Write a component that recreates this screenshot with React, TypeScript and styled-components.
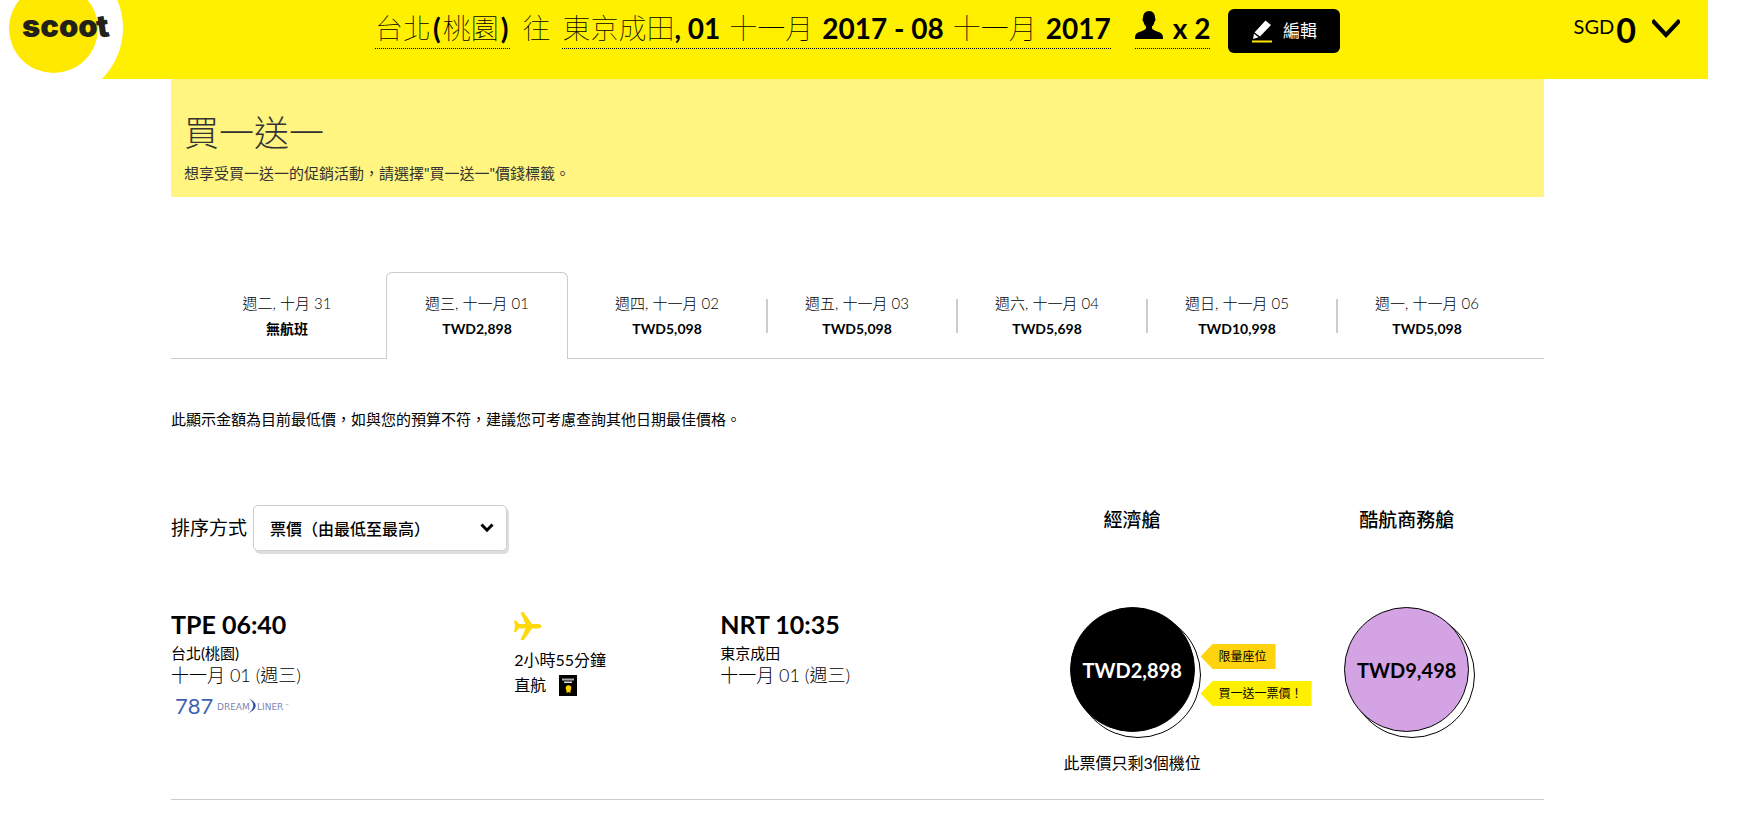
import React from "react";
import styled, { createGlobalStyle } from "styled-components";

const GlobalStyle = createGlobalStyle`
  *, *::before, *::after { box-sizing: border-box; }
  body {
    margin: 0;
    background: #fff;
    color: #000;
    font-family: Lato, "Noto Sans CJK TC", sans-serif;
    font-size: 15px;
    font-weight: 400;
  }
  button, select { font: inherit; color: inherit; }
  h1, h2, p { margin: 0; font-weight: inherit; }
`;

const Page = styled.div`
  margin-right: 55px;
`;

const TopBar = styled.header`
  display: flex;
  align-items: flex-start;
  min-height: 79px;
  padding-right: 28px;
  background: #fff000;
`;

const LogoLink = styled.a`
  display: block;
  flex: none;
  height: 79px;
`;

const Trip = styled.div`
  display: flex;
  align-items: flex-start;
  margin-left: 245px;
  padding-top: 8px;
  font-size: 28px;
  line-height: 40px;
  font-weight: 100;
  white-space: nowrap;

  b { font-weight: 700; }
`;

const TripPart = styled.a`
  border-bottom: 1px dotted #000;
  color: inherit;
  text-decoration: none;
`;

const Paren = styled.b`
  margin: 0 2px;
`;

const To = styled.span`
  margin: 0 12px;
`;

const Month = styled.span`
  margin: 0 1px;
`;

const Travellers = styled(TripPart)`
  display: flex;
  gap: 10px;
  margin-left: 24px;

  svg { margin-top: 3px; }
`;

const EditButton = styled.button`
  display: flex;
  align-items: center;
  justify-content: center;
  gap: 10px;
  width: 112px;
  height: 44px;
  margin: 1px 0 0 18px;
  padding: 0;
  border: 0;
  border-radius: 6px;
  background: #000;
  color: #fff;
  font-size: 17px;
  font-weight: 400;
  line-height: 24px;
`;

const Cart = styled.button`
  display: flex;
  align-items: flex-start;
  margin-left: auto;
  padding: 8px 0 0;
  border: 0;
  background: none;
  font-size: 20px;
  line-height: 36px;

  svg { margin: 11px 0 0 16px; }
`;

const CartTotal = styled.span`
  margin-left: 2px;
  font-size: 34px;
  font-weight: 700;
  line-height: 44px;
`;

const Content = styled.main`
  padding: 0 164px 0 171px;
`;

const Promo = styled.section`
  padding: 29px 13px 14px;
  background: #fff580;
  color: #333;
`;

const PromoTitle = styled.h1`
  font-size: 35px;
  font-weight: 200;
  line-height: 48px;
`;

const PromoText = styled.p`
  margin-top: 7px;
  line-height: 20px;
`;

const Tabs = styled.nav`
  display: flex;
  margin-top: 75px;
  padding: 0 18px 0 25px;
  border-bottom: 1px solid #ccc;
`;

const TabSlot = styled.div<{ $divided?: boolean }>`
  position: relative;
  flex: 1 1 0;
  padding-right: 8px;

  &::after {
    content: "";
    display: ${(p) => (p.$divided ? "block" : "none")};
    position: absolute;
    top: 27px;
    right: -2px;
    width: 2px;
    height: 34px;
    background: #ccc;
  }
`;

const Tab = styled.button<{ $active?: boolean }>`
  display: block;
  width: 100%;
  margin-bottom: -1px;
  padding: 18px 0;
  border: 1px solid ${(p) => (p.$active ? "#ccc" : "transparent")};
  border-bottom: 0;
  border-radius: 6px 6px 0 0;
  background: ${(p) => (p.$active ? "#fff" : "none")};
  text-align: center;
`;

const TabDate = styled.span`
  display: block;
  font-weight: 300;
  line-height: 24px;
`;

const TabPrice = styled.span`
  display: block;
  margin-top: 2px;
  font-size: 14px;
  font-weight: 700;
  line-height: 24px;
`;

const Notice = styled.p`
  margin-top: 50px;
  line-height: 20px;
`;

const Columns = styled.div`
  display: grid;
  grid-template-columns: 5fr 3fr 4fr 4fr 4fr;
`;

const ListHeader = styled(Columns)`
  margin-top: 76px;
`;

const Sort = styled.div`
  display: flex;
  align-items: center;
  grid-column: span 3;
  gap: 6px;
  font-size: 19px;

  label { line-height: 28px; }
`;

const SelectBox = styled.div`
  display: grid;
  grid-template-columns: 1fr 26px;
  align-items: center;
  width: 254px;
  height: 46px;
  border: 1px solid #ccc;
  border-radius: 5px;
  box-shadow: 2px 3px 0 #dedede;

  select {
    grid-area: 1 / 1 / 2 / 3;
    height: 44px;
    padding: 0 30px 0 16px;
    border: 0;
    background: none;
    appearance: none;
    font-size: 16px;
    font-weight: 500;
  }

  svg {
    grid-area: 1 / 2;
    pointer-events: none;
  }
`;

const CabinName = styled.h2`
  font-size: 19px;
  font-weight: 500;
  line-height: 30px;
  text-align: center;
`;

const Flight = styled(Columns)`
  margin-top: 56px;
  padding-bottom: 24px;
  border-bottom: 1px solid #ccc;
`;

const StopTime = styled.div`
  font-size: 25px;
  font-weight: 700;
  line-height: 34px;
`;

const City = styled.div`
  line-height: 24px;
`;

const StopDate = styled.div`
  font-size: 18px;
  font-weight: 300;
  line-height: 20px;
`;

const Aircraft = styled.svg`
  display: block;
  margin-top: 9px;
`;

const Leg = styled.div`
  padding-top: 5px;
  font-size: 16px;

  > svg { display: block; margin-bottom: 8px; }
`;

const LegTime = styled.div`
  line-height: 24px;
`;

const LegKind = styled.div`
  display: flex;
  align-items: center;
  gap: 13px;
  line-height: 26px;
`;

const Fare = styled.div`
  display: flex;
  flex-direction: column;
  align-items: center;
`;

const FareWrap = styled.div`
  position: relative;
  isolation: isolate;
`;

const FareButton = styled.button<{ $business?: boolean }>`
  display: block;
  width: 125px;
  height: 125px;
  padding: 0;
  border: 1px solid #000;
  border-radius: 50%;
  background: ${(p) => (p.$business ? "#d4a3e3" : "#000")};
  color: ${(p) => (p.$business ? "#000" : "#fff")};
  font-size: 20px;
  font-weight: 700;

  &::after {
    content: "";
    position: absolute;
    z-index: -1;
    top: 5px;
    left: 5px;
    width: 126px;
    height: 126px;
    border: 1px solid #000;
    border-radius: 50%;
  }
`;

const Tags = styled.div`
  position: absolute;
  top: 37px;
  left: 131px;
  display: flex;
  flex-direction: column;
  align-items: flex-start;
  gap: 12px;
`;

const Tag = styled.span<{ $color: string }>`
  padding: 0 9px 0 18px;
  background: ${(p) => p.$color};
  clip-path: polygon(12px 0, 100% 0, 100% 100%, 12px 100%, 0 50%);
  font-size: 12px;
  line-height: 25px;
  white-space: nowrap;
`;

const SeatsLeft = styled.p`
  margin-top: 19px;
  font-size: 16px;
  line-height: 24px;
`;

const days = [
  { day: "週二, 十月 31", price: "無航班" },
  { day: "週三, 十一月 01", price: "TWD2,898", active: true },
  { day: "週四, 十一月 02", price: "TWD5,098", divided: true },
  { day: "週五, 十一月 03", price: "TWD5,098", divided: true },
  { day: "週六, 十一月 04", price: "TWD5,698", divided: true },
  { day: "週日, 十一月 05", price: "TWD10,998", divided: true },
  { day: "週一, 十一月 06", price: "TWD5,098" },
];

function Logo() {
  return (
    <svg width="130" height="79" viewBox="0 0 130 79" role="img" aria-label="scoot">
      <circle cx="51" cy="28" r="72" fill="#fff" />
      <rect width="9" height="79" fill="#fff" />
      <circle cx="53.5" cy="28.5" r="44.5" fill="#ffe900" />
      <g fill="#222218" fontFamily="Inter, sans-serif" fontWeight="900">
        <text x="22" y="37" fontSize="31">scoo</text>
        <text x="0" y="0" fontSize="31" transform="translate(98 38) rotate(-8)">t</text>
      </g>
    </svg>
  );
}

function DreamlinerLogo() {
  return (
    <Aircraft width="130" height="24" viewBox="0 0 130 24" role="img" aria-label="787 Dreamliner">
      <text x="4" y="20" fontFamily="Lato, sans-serif" fontSize="22" fill="#3f5fb5">787</text>
      <g fontFamily="DejaVu Sans, sans-serif" fontSize="9" fill="#7a86b4">
        <text x="46" y="16">DREAM</text>
        <text x="86" y="16">LINER</text>
        <text x="114" y="13" fontSize="4">™</text>
      </g>
      <path d="M78 4.500Q92 12 77 19.500Q87 12 78 4.500Z" fill="#2f50a8" />
    </Aircraft>
  );
}

export default function App() {
  return (
    <>
      <GlobalStyle />
      <Page>
        <TopBar>
          <LogoLink href="#home">
            <Logo />
          </LogoLink>
          <Trip>
            <TripPart href="#from">
              台北<Paren>(</Paren>桃園<Paren>)</Paren>
            </TripPart>
            <To>往</To>
            <TripPart href="#dates">
              東京成田<b>, 01</b> <Month>十一月</Month> <b>2017 - 08</b> <Month>十一月</Month> <b>2017</b>
            </TripPart>
            <Travellers href="#travellers">
              <svg width="28" height="28" viewBox="0 0 28 28" aria-hidden="true">
                <path d="M14 0c4 0 6 3 6 7 1 1 .5 3-.6 4-.3 2-1.400 3.500-2.400 4.500v2c1 2.500 9 3 10.500 6.500.4 1 .5 2.500.5 4H0c0-1.500.1-3 .5-4C2 20.500 10 20 11 17.500v-2c-1-1-2.100-2.500-2.400-4.500C7.500 10 7 8 8 7c0-4 2-7 6-7z" />
              </svg>
              <b>x 2</b>
            </Travellers>
            <EditButton type="button">
              <svg width="21" height="24" viewBox="0 0 21 24" aria-hidden="true">
                <path d="M13.500 1.500l5.500 4.500L8 17.500l-5.500-4zM2 14.800l4.500 3.400L1 20z" fill="#fff" />
                <rect y="21.500" width="20" height="2" fill="#ffe600" />
              </svg>
              編輯
            </EditButton>
          </Trip>
          <Cart type="button">
            SGD<CartTotal>0</CartTotal>
            <svg width="28" height="19" viewBox="0 0 28 19" aria-hidden="true">
              <path d="M0 1.500L2 0L14 13L26 0L28 1.500V4L14 19L0 4z" />
            </svg>
          </Cart>
        </TopBar>

        <Content>
          <Promo>
            <PromoTitle>買一送一</PromoTitle>
            <PromoText>想享受買一送一的促銷活動，請選擇"買一送一"價錢標籤。</PromoText>
          </Promo>

          <Tabs>
            {days.map((d) => (
              <TabSlot key={d.day} $divided={d.divided}>
                <Tab type="button" $active={d.active}>
                  <TabDate>{d.day}</TabDate>
                  <TabPrice>{d.price}</TabPrice>
                </Tab>
              </TabSlot>
            ))}
          </Tabs>

          <Notice>此顯示金額為目前最低價，如與您的預算不符，建議您可考慮查詢其他日期最佳價格。</Notice>

          <ListHeader>
            <Sort>
              <label htmlFor="sort">排序方式</label>
              <SelectBox>
                <select id="sort">
                  <option>票價（由最低至最高）</option>
                </select>
                <svg width="14" height="10" viewBox="0 0 14 10" aria-hidden="true">
                  <path d="M1.500 1.500L7 7.200l5.500-5.700" fill="none" stroke="#000" strokeWidth="3" />
                </svg>
              </SelectBox>
            </Sort>
            <CabinName>經濟艙</CabinName>
            <CabinName>酷航商務艙</CabinName>
          </ListHeader>

          <Flight>
            <div>
              <StopTime>TPE 06:40</StopTime>
              <City>台北(桃園)</City>
              <StopDate>十一月 01 (週三)</StopDate>
              <DreamlinerLogo />
            </div>
            <Leg>
              <svg width="28" height="28" viewBox="0 0 28 28" aria-hidden="true">
                <path
                  d="M0 8.500h2l3 3.500h6.500L6.500.5 9.500 0l8.500 12h6c2 0 3.500 1 3.500 2.200s-1.500 2.200-3.500 2.200h-6l-8.500 12-3-.5 5-11.500H5L2 20H0l1-5.800z"
                  fill="#ffd90a"
                />
              </svg>
              <LegTime>2小時55分鐘</LegTime>
              <LegKind>
                直航
                <svg width="18" height="21" viewBox="0 0 18 21" aria-hidden="true">
                  <rect width="18" height="21" />
                  <path d="M3 3.500h12v2H3z" fill="#aaa" />
                  <path d="M5 6.500h8v1.500H5z" fill="#ddd" />
                  <circle cx="9.500" cy="13" r="2.800" fill="#ffd000" />
                  <path d="M7.500 14h4v4l-2-1-2 1z" fill="#ffd000" />
                </svg>
              </LegKind>
            </Leg>
            <div>
              <StopTime>NRT 10:35</StopTime>
              <City>東京成田</City>
              <StopDate>十一月 01 (週三)</StopDate>
            </div>
            <Fare>
              <FareWrap>
                <FareButton type="button">TWD2,898</FareButton>
                <Tags>
                  <Tag $color="#ffd40f">限量座位</Tag>
                  <Tag $color="#fff000">買一送一票價！</Tag>
                </Tags>
              </FareWrap>
              <SeatsLeft>此票價只剩3個機位</SeatsLeft>
            </Fare>
            <Fare>
              <FareWrap>
                <FareButton type="button" $business>
                  TWD9,498
                </FareButton>
              </FareWrap>
            </Fare>
          </Flight>
        </Content>
      </Page>
    </>
  );
}
